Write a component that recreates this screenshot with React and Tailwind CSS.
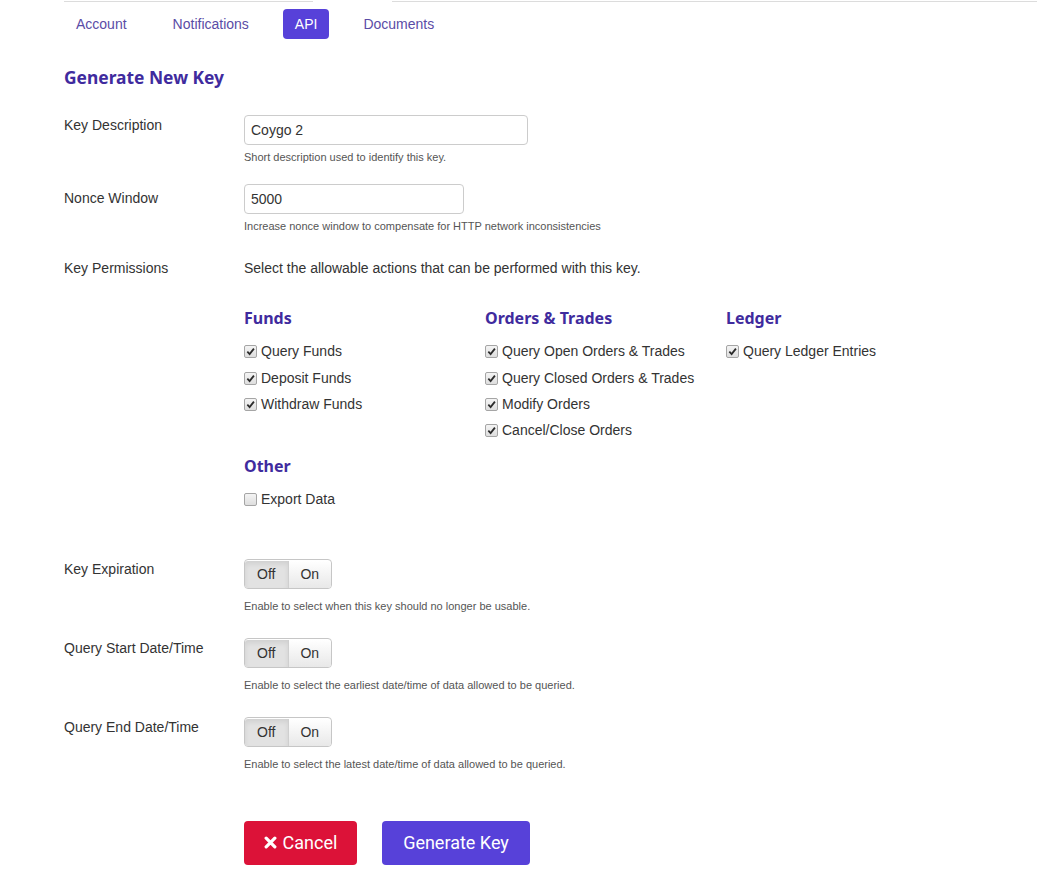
import React, { useState } from "react";

const tabs = ["Account", "Notifications", "API", "Documents"];

const groups = [
  {
    title: "Funds",
    items: [
      ["Query Funds", true],
      ["Deposit Funds", true],
      ["Withdraw Funds", true],
    ],
  },
  {
    title: "Orders & Trades",
    items: [
      ["Query Open Orders & Trades", true],
      ["Query Closed Orders & Trades", true],
      ["Modify Orders", true],
      ["Cancel/Close Orders", true],
    ],
  },
  {
    title: "Ledger",
    items: [["Query Ledger Entries", true]],
  },
];

const brandFont = { fontFamily: "'Noto Sans', Lato, sans-serif" };

function Check({ checked }) {
  return (
    <span className="flex h-[13px] w-[13px] items-center justify-center rounded-[2px] border border-[#a5a5a5] bg-gradient-to-b from-[#f4f4f4] to-[#dedede]">
      {checked ? (
        <svg width="9" height="9" viewBox="0 0 10 10">
          <path d="M1.5 5.2 L4 7.8 L8.8 1.8" fill="none" stroke="#2b2b2b" strokeWidth="2" />
        </svg>
      ) : null}
    </span>
  );
}

function Perm({ label, checked }) {
  return (
    <label className="flex h-[26.4px] items-center gap-[4px] pt-[1px] text-[14px]">
      <Check checked={checked} />
      <span>{label}</span>
    </label>
  );
}

function Heading({ children }) {
  return (
    <h4 className="mb-[10px] text-[16px] leading-[20px] font-bold text-[#3f2b9e]" style={brandFont}>
      {children}
    </h4>
  );
}

function Toggle() {
  const [on, setOn] = useState(false);
  return (
    <div className="flex h-[30px] w-[88px] rounded-[4px] border border-[#c6c6c6] pt-[1px] text-[14px] text-[#333]">
      <button
        type="button"
        onClick={() => setOn(false)}
        className={
          on
            ? "w-[44px] rounded-l-[3px] border-r border-[#cfcfcf] bg-gradient-to-b from-white to-[#e8e8e8]"
            : "w-[44px] rounded-l-[3px] border-r border-[#cfcfcf] bg-[#e2e2e2] shadow-[inset_0_3px_5px_rgba(0,0,0,0.08)]"
        }
      >
        Off
      </button>
      <button
        type="button"
        onClick={() => setOn(true)}
        className={
          on
            ? "w-[43px] rounded-r-[3px] bg-[#e2e2e2] shadow-[inset_0_3px_5px_rgba(0,0,0,0.08)]"
            : "w-[43px] rounded-r-[3px] bg-gradient-to-b from-white to-[#e8e8e8]"
        }
      >
        On
      </button>
    </div>
  );
}

function Row({ label, children, className = "", labelClass = "" }) {
  return (
    <div className={"flex " + className}>
      <div className={"w-[180px] shrink-0 text-[14px] leading-[20px] " + labelClass}>{label}</div>
      <div className="flex-1">{children}</div>
    </div>
  );
}

function Help({ children, className = "mt-[5px]" }) {
  return <p className={"text-[11px] leading-[14px] text-[#555] " + className}>{children}</p>;
}

export default function App() {
  const [desc, setDesc] = useState("Coygo 2");
  const [nonce, setNonce] = useState("5000");

  return (
    <div className="min-h-[887px] bg-white pl-[64px] text-[#333]" style={{ fontFamily: "'Liberation Sans', Arial, sans-serif" }}>
      <div className="flex pt-[1px]">
        <div className="w-[249px] border-t border-[#dcdcdc]" />
        <div className="w-[79px]" />
        <div className="flex-1 border-t border-[#dcdcdc]" />
      </div>

      <div className="mt-[7px] flex gap-[22px]">
        {tabs.map((t) => (
          <div
            key={t}
            className={
              t === "API"
                ? "h-[30px] rounded-[4px] bg-[#5741d9] px-3 text-[14px] leading-[30px] text-white"
                : "h-[30px] rounded-[4px] px-3 text-[14px] leading-[30px] text-[#5a4ca6]"
            }
          >
            {t}
          </div>
        ))}
      </div>

      <h2 className="mt-[26px] text-[17.4px] leading-[24px] font-bold text-[#3f2b9e]" style={brandFont}>
        Generate New Key
      </h2>

      <Row label="Key Description" className="mt-[26px]">
        <input
          value={desc}
          onChange={(e) => setDesc(e.target.value)}
          className="h-[30px] w-[284px] rounded-[4px] border border-[#ccc] px-[6px] text-[14px] text-[#333] outline-none"
        />
        <Help>Short description used to identify this key.</Help>
      </Row>

      <Row label="Nonce Window" className="mt-[20px]" labelClass="pt-[4px]">
        <input
          value={nonce}
          onChange={(e) => setNonce(e.target.value)}
          className="h-[30px] w-[220px] rounded-[4px] border border-[#ccc] px-[6px] text-[14px] text-[#333] outline-none"
        />
        <Help>Increase nonce window to compensate for HTTP network inconsistencies</Help>
      </Row>

      <Row label="Key Permissions" className="mt-[25px]">
        <p className="text-[14px] leading-[20px]">Select the allowable actions that can be performed with this key.</p>
        <div className="mt-[30px]">
          <div className="flex">
            {groups.map((g) => (
              <div key={g.title} className="w-[241px]">
                <Heading>{g.title}</Heading>
                {g.items.map(([l, c]) => (
                  <Perm key={l} label={l} checked={c} />
                ))}
              </div>
            ))}
          </div>
          <div className="mt-[12px] w-[241px]">
            <Heading>Other</Heading>
            <Perm label="Export Data" checked={false} />
          </div>
        </div>
      </Row>

      <Row label="Key Expiration" className="mt-[47px]">
        <Toggle />
        <Help className="mt-[10px]">Enable to select when this key should no longer be usable.</Help>
      </Row>

      <Row label="Query Start Date/Time" className="mt-[25px]">
        <Toggle />
        <Help className="mt-[10px]">Enable to select the earliest date/time of data allowed to be queried.</Help>
      </Row>

      <Row label="Query End Date/Time" className="mt-[25px]">
        <Toggle />
        <Help className="mt-[10px]">Enable to select the latest date/time of data allowed to be queried.</Help>
      </Row>

      <div className="mt-[50px] flex gap-[25px] pl-[180px]">
        <button
          type="button"
          className="flex h-[44px] w-[113px] items-center justify-center gap-[6px] rounded-[4px] bg-[#dc1238] text-[18px] text-white"
          style={{ fontFamily: "Roboto, 'Liberation Sans', sans-serif" }}
        >
          <svg width="13" height="13" viewBox="0 0 12 12">
            <path d="M2 2 L10 10 M10 2 L2 10" stroke="white" strokeWidth="3" strokeLinecap="round" />
          </svg>
          Cancel
        </button>
        <button
          type="button"
          className="h-[44px] w-[148px] rounded-[4px] bg-[#5741d9] text-[18px] text-white"
          style={{ fontFamily: "Roboto, 'Liberation Sans', sans-serif" }}
        >
          Generate Key
        </button>
      </div>
    </div>
  );
}
